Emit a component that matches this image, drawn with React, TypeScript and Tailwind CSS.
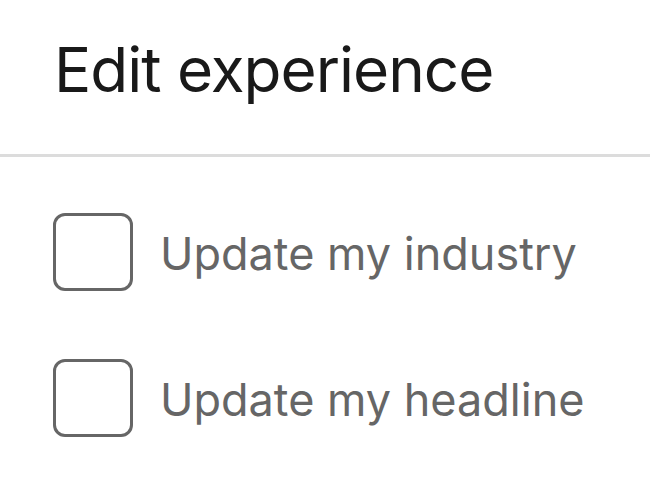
export default function App() {
  const options = ["Update my industry", "Update my headline"];
  return (
    <div className="h-[502px] w-[650px] bg-white" style={{ fontFamily: "Inter, 'Noto Sans', sans-serif" }}>
      <div className="px-[54px] pt-[39px] pb-[53px]">
        <h1 className="whitespace-nowrap text-[62px] leading-none font-normal tracking-[-1px] text-[#191919]">Edit experience</h1>
      </div>
      <div className="h-[3px] w-full bg-[#dcdcdc]" />
      <div className="flex flex-col gap-[68px] px-[53px] pt-[56px]">
        {options.map(label => (
          <label key={label} className="flex items-center gap-[27px]">
            <span className="h-[78px] w-[80px] shrink-0 rounded-[12px] border-[3px] border-[#666666]" />
            <span className="h-[78px] whitespace-nowrap pt-[4px] text-[45px] leading-[74px] text-[#666666]">{label}</span>
          </label>
        ))}
      </div>
    </div>
  );
}
